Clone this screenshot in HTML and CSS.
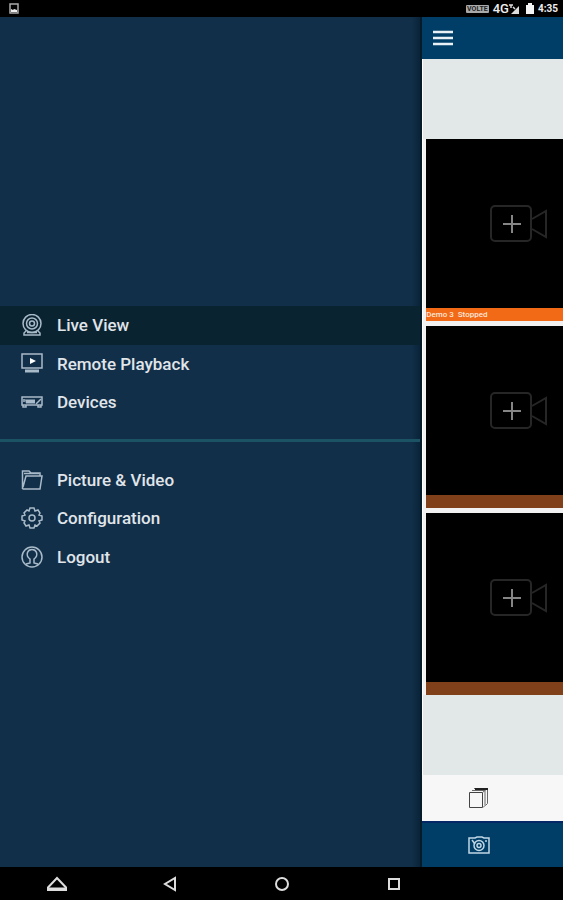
FILE: index.html
```html
<!DOCTYPE html>
<html lang="en">
<head>
<meta charset="utf-8">
<meta name="viewport" content="width=device-width, initial-scale=1">
<title>Live View</title>
<link rel="stylesheet" href="styles.css">
</head>
<body>
<svg class="defs" aria-hidden="true">
  <symbol id="add-camera" viewBox="0 0 58 38">
    <g fill="none" stroke="#262626" stroke-width="2">
      <rect x="1" y="1" width="40" height="35" rx="4"/>
      <path d="M42 14 56 6v26L42 24"/>
    </g>
    <path d="M13 19h18M22 10v18" stroke="#858585" stroke-width="2"/>
  </symbol>
</svg>
<div class="screen">
  <header class="status">
    <svg class="status-picture" width="10" height="11" viewBox="0 0 10 11"><rect x="1" y="1" width="8" height="9" fill="none" stroke="#aaa" stroke-width="1.5"/><path d="M2 6l2 1 1-1 3 1v2H2z" fill="#eee"/></svg>
    <span class="volte">VOLTE</span>
    <span class="network">4G</span>
    <svg width="11" height="12" viewBox="0 0 11 12"><path d="M0 2h4M2 2v3M4 4l2 2" stroke="#ddd" stroke-width="1.500"/><path d="M10 3v8H2z" fill="#ddd"/></svg>
    <svg class="battery" width="8" height="11" viewBox="0 0 8 11"><path d="M2 0h4v2h2v9H0V2h2z" fill="#f4f4f4"/></svg>
    <time>4:35</time>
  </header>
  <div class="app">
    <aside class="drawer">
      <nav class="menu">
        <a class="item active" href="#live">
          <svg width="22" height="22" viewBox="0 0 22 22"><circle cx="11" cy="9.5" r="9"/><circle cx="11" cy="9.5" r="5.500"/><circle cx="11" cy="9.5" r="2.500"/><path d="M5 17 3 19v2h16v-2l-2-2M6 18.500h10"/></svg>
          Live View</a>
        <a class="item" href="#playback">
          <svg width="22" height="22" viewBox="0 0 22 22"><path d="M1 1h20v14H1z"/><path d="M4 18h14" stroke-width="3"/><path d="M9 5v6l6-3z" fill="#fff" stroke="none"/></svg>
          Remote Playback</a>
        <a class="item" href="#devices">
          <svg width="22" height="22" viewBox="0 0 22 22"><path d="M1 6h20v8H1zM2 14v2h3v-2M17 14v2h3v-2"/><path d="M4 8.500h10v4H5z" fill="#a9bac8" stroke="none"/><path d="M15 13l5-5M3 8v3"/></svg>
          Devices</a>
        <hr class="divider">
        <a class="item" href="#media">
          <svg width="22" height="22" viewBox="0 0 22 22"><path d="M1.500 20V2H8l2 2h9v3M1.500 20H19l2-13H5L2 18M3 4.500h15"/></svg>
          Picture &amp; Video</a>
        <a class="item" href="#configuration">
          <svg width="22" height="22" viewBox="0 0 22 22"><path d="M9 1h4l1 3 3-1 2 3-1 2 3 1v4l-3 1 1 2-3 3-2-1-1 3H9l-1-3-3 1-2-3 1-2-3-1V9l3-1-1-2 3-3 2 1z"/><circle cx="11" cy="11" r="3"/></svg>
          Configuration</a>
        <a class="item" href="#logout">
          <svg width="22" height="22" viewBox="0 0 22 22"><circle cx="11" cy="11" r="10"/><path d="M5 18l4-1v-4C6 11 6 8 6.500 6.500 8 2.500 14 2.500 15.500 6.500 16 8 16 11 13 13v4l4 1"/></svg>
          Logout</a>
      </nav>
    </aside>
    <main class="live">
      <div class="topbar">
        <button class="icon-button" aria-label="Menu"><svg width="20" height="16" viewBox="0 0 20 16"><path d="M0 2h20M0 8h20M0 14h20" stroke="#e9f1f7" stroke-width="2.400"/></svg></button>
      </div>
      <div class="stage">
        <div class="tiles">
          <section class="tile"><button class="add" aria-label="Add camera"><svg width="58" height="38"><use href="#add-camera"/></svg></button><p class="caption selected">Demo 3&nbsp; Stopped</p></section>
          <section class="tile"><button class="add" aria-label="Add camera"><svg width="58" height="38"><use href="#add-camera"/></svg></button><p class="caption"></p></section>
          <section class="tile"><button class="add" aria-label="Add camera"><svg width="58" height="38"><use href="#add-camera"/></svg></button><p class="caption"></p></section>
        </div>
      </div>
      <div class="tools">
        <button class="icon-button" aria-label="Window layout"><svg width="22" height="22" viewBox="0 0 22 22" fill="none" stroke="#666"><path d="M1.500 5.500h13v15h-13z" stroke="#444"/><path d="M4 3.500h13v15l-2 2M14.500 5.500l5-4"/><path d="M6 1.500h13.500v15l-2 2"/><path d="M7 2h13" stroke="#222" stroke-width="2"/></svg></button>
      </div>
      <div class="actions">
        <button class="icon-button" aria-label="Take snapshot"><svg width="22" height="20" viewBox="0 0 22 20" fill="none" stroke="#c0d6e6" stroke-width="1.500"><path d="M1 3h6l2-1h5l2 1h5v15H1z"/><circle cx="11" cy="10.500" r="5"/><circle cx="11" cy="10.500" r="2"/><path d="M4 5l3 4M17 6h2"/></svg></button>
      </div>
    </main>
  </div>
  <footer class="system">
    <button aria-label="Drawer"><svg width="20" height="16" viewBox="0 0 20 16"><path d="M1 11.500 10 2l9 9.500V14H1z"/><path d="M1 13h18" stroke-width="3"/></svg></button>
    <button aria-label="Back"><svg width="20" height="16" viewBox="0 0 20 16"><path d="M15 2v12L5 8z"/></svg></button>
    <button aria-label="Home"><svg width="20" height="16" viewBox="0 0 20 16"><circle cx="10" cy="8" r="6"/></svg></button>
    <button aria-label="Recent apps"><svg width="20" height="16" viewBox="0 0 20 16"><path d="M5 3h10v10H5z"/></svg></button>
    <span></span>
  </footer>
</div>
</body>
</html>
```
FILE: styles.css
```css
* { box-sizing: border-box; }

body {
  margin: 0;
  background: #000;
  font-family: Roboto, "Liberation Sans", sans-serif;
}

button {
  padding: 0;
  border: 0;
  background: none;
}

svg { display: block; flex: none; }

.defs { position: absolute; width: 0; height: 0; }

.screen {
  display: flex;
  flex-direction: column;
  min-height: 100vh;
}

.status {
  display: flex;
  align-items: center;
  height: 17px;
  padding: 0 5px 0 9px;
  color: #eee;
  font-size: 10px;
  line-height: 16px;
}

.status-picture { margin-right: auto; }

.volte {
  padding: 0 1px;
  margin-right: 4px;
  border-radius: 1px;
  background: #aaa;
  color: #222;
  font-size: 7px;
  font-weight: 700;
  line-height: 8px;
}

.network { font-size: 13px; font-weight: 500; }
.battery { margin: 0 4px 0 6px; }
.status time { font-weight: 700; }

.app {
  display: grid;
  grid-template-columns: 3fr 1fr;
  flex: 1;
}

.drawer {
  display: flex;
  flex-direction: column;
  justify-content: center;
  padding-bottom: 2px;
  border-right: 2px solid #061b2a;
  background: linear-gradient(to right, #112f49 98%, #09243a);
}

.menu {
  display: grid;
  grid-template-rows: repeat(7, 1fr);
  height: 270px;
}

.item {
  display: flex;
  align-items: center;
  gap: 14px;
  padding-left: 21px;
  color: #e0e5ea;
  font-size: 17px;
  font-weight: 500;
  line-height: 24px;
  text-decoration: none;
}

.item svg {
  fill: none;
  stroke: #a9bac8;
  stroke-width: 1.5;
}

.active { background: #0a2331; }

.divider {
  align-self: center;
  width: 100%;
  height: 3px;
  margin: 0;
  border: 0;
  background: #1b5365;
}

.live {
  display: flex;
  flex-direction: column;
  min-width: 0;
  overflow: hidden;
  background: #e2e8e8;
}

.topbar {
  display: flex;
  align-items: center;
  height: 42px;
  padding-left: 11px;
  background: #003e67;
}

.stage {
  display: flex;
  flex: 1;
  flex-direction: column;
  justify-content: center;
  border-left: 1px solid #fff;
}

.tiles {
  display: grid;
  gap: 5px;
  padding-left: 3px;
  background: #f1f1f1;
}

.tile {
  display: flex;
  flex-direction: column;
  height: 182px;
  background: #000;
}

.add {
  display: flex;
  flex: 1;
  align-items: center;
  padding-left: 64px;
}

.caption {
  height: 13px;
  margin: 0;
  background: #80411a;
  color: #ffe8dc;
  font-size: 8px;
  font-weight: 500;
  line-height: 13px;
  white-space: nowrap;
}

.selected { background: #f36a16; }

.tools,
.actions {
  display: flex;
  align-items: center;
  height: 46px;
  padding-left: 46px;
}

.tools { background: #f7f7f7; }
.actions { border-top: 2px solid #052765; background: #003e67; }

.system {
  display: grid;
  grid-template-columns: repeat(5, 1fr);
  align-items: center;
  height: 33px;
  padding-left: 1px;
}

.system button { display: flex; justify-content: center; }

.system svg {
  fill: none;
  stroke: #ddd;
  stroke-width: 2;
}
```
